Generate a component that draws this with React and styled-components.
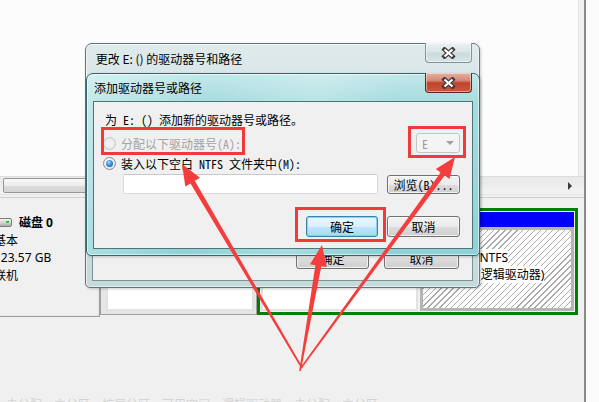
import React from 'react';
import styled, { createGlobalStyle } from 'styled-components';

const GlobalStyle = createGlobalStyle`
  html, body { margin: 0; padding: 0; }
  body {
    width: 599px;
    height: 402px;
    overflow: hidden;
    background: #fafafa;
    font-family: "Noto Sans", "Noto Sans CJK SC", sans-serif;
  }
`;

const uiFont = `"Noto Sans Mono CJK SC", "Noto Sans CJK SC", "Liberation Mono", monospace`;
const titleFont = `"Noto Sans CJK SC", "Noto Sans", sans-serif`;

const activeFrame = `
  linear-gradient(100deg, rgba(255,255,255,0.35) 0%, rgba(255,255,255,0) 30%, rgba(255,255,255,0.22) 55%, rgba(255,255,255,0) 75%),
  linear-gradient(180deg, #c3e7e9 0%, #a7dcdf 15%, #8fd2d5 100%)
`;
const inactiveFrame = `linear-gradient(180deg, #dfeaeb 0%, #d2e2e4 30%, #c6dadc 100%)`;

const Screen = styled.div`
  position: relative;
  width: 599px;
  height: 402px;
  overflow: hidden;
  display: flex;
  background: #fafafa;
`;

const Console = styled.div`
  width: 584px;
  display: flex;
  flex-direction: column;
  background: #f0f0f0;
  border-right: 2px solid #8a8a8a;
`;

const RightStrip = styled.div`
  flex: 1;
  background: #fbfbfb;
`;

const VolumeList = styled.div`
  height: 176px;
  background: #fcfcfc;
  border-right: 1px solid #e2e2e2;
  margin-right: 5px;
`;

const HScroll = styled.div`
  height: 17px;
  display: flex;
  align-items: center;
  padding: 0 12px 0 3px;
  background: linear-gradient(#e8e8e8, #f3f3f3);
  border-top: 1px solid #dedede;
  border-bottom: 1px solid #e6e6e6;
`;

const Thumb = styled.div`
  width: 300px;
  height: 13px;
  border: 1px solid #979797;
  border-radius: 2px;
  background: linear-gradient(#f8f8f8, #ececec 50%, #dcdcdc 51%, #d4d4d4);
`;

const ScrollArrow = styled.div`
  margin-left: auto;
  width: 0;
  height: 0;
  border-left: 4px solid #3d3d3d;
  border-top: 4px solid transparent;
  border-bottom: 4px solid transparent;
`;

const DiskPane = styled.div`
  margin-top: 2px;
  height: 119px;
  display: flex;
  border-top: 1px solid #d0d0d0;
`;

const DiskInfo = styled.div`
  width: 99px;
  border-right: 1px solid #a0a0a0;
  border-bottom: 1px solid #a0a0a0;
  box-shadow: inset -1px -1px 0 #e4e4e4;
  padding-top: 16px;
  overflow: hidden;
  font-size: 12px;
  line-height: 17.5px;
  color: #000;
`;

const InfoLine = styled.div`
  display: flex;
  align-items: center;
  margin-left: -6px;
  white-space: nowrap;
  font-weight: ${p => (p.$bold ? 700 : 400)};
`;

const DiskIcon = styled.span`
  position: relative;
  width: 16px;
  height: 7px;
  margin-right: 7px;
  border: 1px solid #7c7c7c;
  border-radius: 2px;
  background: linear-gradient(#f4f4f4, #cfcfcf 60%, #a9a9a9);

  &::after {
    content: '';
    position: absolute;
    right: 2px;
    top: 2px;
    width: 3px;
    height: 2px;
    background: #3fbf3f;
  }
`;

const Partitions = styled.div`
  flex: 1;
  display: flex;
  padding: 10px 6px 2px 0;
`;

const Primary = styled.div`
  width: 157px;
  box-sizing: border-box;
  display: flex;
  flex-direction: column;
  border: 1px solid #a0a0a0;
  background: #e6e6e6;
  padding: 0 2px 3px 5px;
`;

const Extended = styled.div`
  flex: 1;
  display: flex;
  gap: 2px;
  border: 3px solid #008000;
  padding: 1px;
`;

const Logical = styled.div`
  display: flex;
  flex-direction: column;
  width: ${p => (p.$grow ? 'auto' : '157px')};
  flex: ${p => (p.$grow ? 1 : 'none')};
`;

const Bar = styled.div`
  height: 15px;
  background: ${p => p.$color};
`;

const PartBody = styled.div`
  flex: 1;
  padding: 2px 3px;
  font-size: 12px;
  line-height: 17px;
  white-space: nowrap;
  overflow: hidden;
  background: ${p => (p.$hatched
    ? 'repeating-linear-gradient(135deg, #ffffff 0 3.3px, #a9a9a9 3.3px 4.2px)'
    : '#ffffff')};
  border: ${p => (p.$hatched ? '3px solid #b5b5b5' : '2px solid #e2e2e2')};
`;

const PartLine = styled.div`
  & > span {
    background: #ffffff;
    font-weight: ${p => (p.$bold ? 700 : 400)};
  }
`;

const Footer = styled.div`
  flex: 1;
  display: flex;
  flex-direction: column;
  justify-content: flex-end;
`;

const Legend = styled.div`
  height: 5px;
  overflow: hidden;
  padding-left: 6px;
  font-size: 12px;
  line-height: 16px;
  color: #d4d4d4;
  white-space: nowrap;
`;

/* dialogs */

const Dialog = styled.div`
  position: absolute;
  left: ${p => p.$left}px;
  top: ${p => p.$top}px;
  width: ${p => p.$width}px;
  height: ${p => p.$height}px;
  box-sizing: border-box;
  display: flex;
  flex-direction: column;
  padding: 0 6px 6px;
  border: 1px solid ${p => (p.$active ? '#34666c' : '#5f7579')};
  border-radius: 7px 7px 5px 5px;
  background: ${p => (p.$active ? activeFrame : inactiveFrame)};
  box-shadow: inset 0 0 0 1px rgba(255, 255, 255, 0.55), 1px 1px 3px rgba(0, 0, 0, 0.2);
`;

const TitleBar = styled.div`
  height: ${p => p.$height}px;
  display: flex;
  align-items: center;
  padding-left: 1px;
  font-family: ${titleFont};
  font-size: 12px;
  color: #000;
  white-space: nowrap;
`;

const CloseButton = styled.div`
  position: absolute;
  top: -1px;
  right: 7px;
  width: 47px;
  height: 20px;
  box-sizing: border-box;
  display: flex;
  align-items: center;
  justify-content: center;
  border: 1px solid ${p => (p.$active ? '#5b2a22' : '#7f9599')};
  border-top: none;
  border-radius: 0 0 4px 4px;
  background: ${p => (p.$active
    ? 'linear-gradient(#e7b0a4 0%, #d68774 40%, #c2432d 52%, #c9573f 100%)'
    : 'linear-gradient(#e9f0f1 0%, #dbe6e7 45%, #cbdcde 52%, #d6e4e5 100%)')};
  box-shadow: inset 0 0 0 1px rgba(255, 255, 255, 0.45);
`;

const Client = styled.div`
  flex: 1;
  display: flex;
  flex-direction: column;
  border: 1px solid ${p => (p.$active ? '#4d7479' : '#7b9195')};
  background: #f0f0f0;
  font-family: ${uiFont};
  font-size: 12px;
  color: #000;
`;

const OuterClient = styled(Client)`
  flex-direction: row;
  justify-content: flex-end;
  align-items: flex-end;
  gap: 15px;
  padding: 0 13px 11px 0;
`;

const InnerClient = styled(Client)`
  padding: 11px 12px 0 9px;
`;

const Intro = styled.div`
  margin-left: 2px;
  height: 14px;
  line-height: 14px;
  white-space: nowrap;
`;

const OptionRow = styled.div`
  display: flex;
  align-items: center;
  height: ${p => p.$height}px;
  margin-top: ${p => p.$gap}px;
  white-space: nowrap;
  color: ${p => (p.$disabled ? '#a3a3a3' : '#000')};
`;

const Radio = styled.span`
  position: relative;
  width: 13px;
  height: 13px;
  box-sizing: border-box;
  margin-right: 5px;
  border-radius: 50%;
  border: 1px solid ${p => (p.$disabled ? '#c4c4c4' : '#8a8c8e')};
  background: ${p => (p.$disabled
    ? 'radial-gradient(circle at 50% 50%, #f6f6f6, #e4e4e4)'
    : 'radial-gradient(circle at 40% 35%, #ffffff, #dcdcdc)')};

  &::after {
    content: '';
    display: ${p => (p.$checked ? 'block' : 'none')};
    position: absolute;
    left: 2px;
    top: 2px;
    width: 7px;
    height: 7px;
    border-radius: 50%;
    background: radial-gradient(circle at 40% 35%, #a9dcff 0%, #3a90dc 45%, #0d4f98 100%);
  }
`;

const Combo = styled.div`
  margin-left: auto;
  width: 44px;
  height: 20px;
  box-sizing: border-box;
  display: flex;
  align-items: center;
  justify-content: space-between;
  padding: 0 5px 0 5px;
  border: 1px solid #c3c6c8;
  border-radius: 3px;
  background: #f4f4f4;
  color: #9c9c9c;

  &::after {
    content: '';
    width: 0;
    height: 0;
    border-top: 4px solid #a0a0a0;
    border-left: 4px solid transparent;
    border-right: 4px solid transparent;
  }
`;

const FieldRow = styled.div`
  display: flex;
  align-items: center;
  gap: 9px;
  margin-top: 3px;
  margin-left: 20px;
`;

const PathInput = styled.div`
  width: 255px;
  height: 20px;
  box-sizing: border-box;
  border: 1px solid #dadada;
  border-top-color: #c9c9c9;
  border-radius: 2px;
  background: #fff;
`;

const Button = styled.div`
  width: ${p => p.$width}px;
  height: ${p => p.$height || 21}px;
  box-sizing: border-box;
  display: flex;
  align-items: center;
  justify-content: center;
  border: 1px solid ${p => (p.$default ? '#3c7fb1' : '#707070')};
  border-radius: 3px;
  background: ${p => (p.$default
    ? 'linear-gradient(#eaf6fd 0%, #d9f0fc 50%, #bee6fd 51%, #a7d9f5 100%)'
    : 'linear-gradient(#f2f2f2 0%, #ebebeb 50%, #dddddd 51%, #cfcfcf 100%)')};
  box-shadow: inset 0 0 0 1px ${p => (p.$default ? 'rgba(120, 210, 250, 0.9)' : 'rgba(255, 255, 255, 0.7)')};
  font-family: ${uiFont};
  font-size: 12px;
  color: #000;
  white-space: nowrap;
`;

const HiddenTopButton = styled(Button)`
  align-items: flex-end;
  padding-bottom: 1px;
`;

const ButtonRow = styled.div`
  display: flex;
  justify-content: flex-end;
  gap: 9px;
  margin-top: 22px;
`;

const Overlay = styled.svg`
  position: absolute;
  left: 0;
  top: 0;
  pointer-events: none;
`;

function CloseGlyph() {
  return (
    <svg width="15" height="12" viewBox="0 0 15 12">
      <path d="M3.5 2.5 L11.5 9.5 M11.5 2.5 L3.5 9.5" stroke="#3d3d3d" strokeWidth="4.4" strokeLinecap="square" fill="none" />
      <path d="M3.5 2.5 L11.5 9.5 M11.5 2.5 L3.5 9.5" stroke="#ffffff" strokeWidth="2.2" strokeLinecap="butt" fill="none" />
    </svg>
  );
}

function arrowPoints(bx, by, tx, ty, head, headW, w0, w1) {
  const dx = tx - bx;
  const dy = ty - by;
  const len = Math.hypot(dx, dy);
  const ux = dx / len;
  const uy = dy / len;
  const nx = -uy;
  const ny = ux;
  const hx = tx - ux * head;
  const hy = ty - uy * head;
  const p = (x, y) => `${x.toFixed(1)},${y.toFixed(1)}`;
  return [
    p(bx + (nx * w0) / 2, by + (ny * w0) / 2),
    p(hx + (nx * w1) / 2, hy + (ny * w1) / 2),
    p(hx + (nx * headW) / 2, hy + (ny * headW) / 2),
    p(tx, ty),
    p(hx - (nx * headW) / 2, hy - (ny * headW) / 2),
    p(hx - (nx * w1) / 2, hy - (ny * w1) / 2),
    p(bx - (nx * w0) / 2, by - (ny * w0) / 2),
  ].join(' ');
}

const arrows = [
  { bx: 302, by: 368, tx: 182, ty: 164, w1: 5 },
  { bx: 300, by: 371, tx: 322, ty: 245, w1: 6 },
  { bx: 301, by: 368, tx: 455, ty: 157, w1: 5 },
];

const marks = [
  { x: 102.5, y: 128.5, w: 141, h: 25 },
  { x: 409.5, y: 127.5, w: 55, h: 29 },
  { x: 296.5, y: 208.5, w: 88, h: 32 },
];

export default function App() {
  return (
    <>
      <GlobalStyle />
      <Screen>
        <Console>
          <VolumeList />
          <HScroll>
            <Thumb />
            <ScrollArrow />
          </HScroll>
          <DiskPane>
            <DiskInfo>
              <InfoLine $bold>
                <DiskIcon />
                磁盘 0
              </InfoLine>
              <InfoLine>基本</InfoLine>
              <InfoLine>123.57 GB</InfoLine>
              <InfoLine>联机</InfoLine>
            </DiskInfo>
            <Partitions>
              <Primary>
                <Bar $color="#000080" />
                <PartBody>
                  <PartLine $bold><span>(C:)</span></PartLine>
                  <PartLine><span>48.83 GB NTFS</span></PartLine>
                </PartBody>
              </Primary>
              <Extended>
                <Logical>
                  <Bar $color="#0000ff" />
                  <PartBody>
                    <PartLine $bold><span>(D:)</span></PartLine>
                  </PartBody>
                </Logical>
                <Logical $grow>
                  <Bar $color="#0000ff" />
                  <PartBody $hatched>
                    <PartLine $bold><span>(E:)</span></PartLine>
                    <PartLine><span>48.83 GB NTFS</span></PartLine>
                    <PartLine><span>状态良好 (逻辑驱动器)</span></PartLine>
                  </PartBody>
                </Logical>
              </Extended>
            </Partitions>
          </DiskPane>
          <Footer>
            <Legend>未分配　主分区　扩展分区　可用空间　逻辑驱动器　未分配　主分区</Legend>
          </Footer>
        </Console>
        <RightStrip />

        <Dialog $left={85} $top={43} $width={395} $height={245}>
          <TitleBar $height={29}>&nbsp;更改 E: () 的驱动器号和路径</TitleBar>
          <CloseButton>
            <CloseGlyph />
          </CloseButton>
          <OuterClient>
            <HiddenTopButton $width={73} $height={23}>确定</HiddenTopButton>
            <HiddenTopButton $width={75} $height={23}>取消</HiddenTopButton>
          </OuterClient>
        </Dialog>

        <Dialog $active $left={86} $top={73} $width={394} $height={183}>
          <TitleBar $height={27}>添加驱动器号或路径</TitleBar>
          <CloseButton $active>
            <CloseGlyph />
          </CloseButton>
          <InnerClient $active>
            <Intro>为 E: () 添加新的驱动器号或路径。</Intro>
            <OptionRow $disabled $height={20} $gap={6}>
              <Radio $disabled />
              分配以下驱动器号(A):
              <Combo>E</Combo>
            </OptionRow>
            <OptionRow $height={16} $gap={2}>
              <Radio $checked />
              装入以下空白 NTFS 文件夹中(M):
            </OptionRow>
            <FieldRow>
              <PathInput />
              <Button $width={73} $height={19}>浏览(B)...</Button>
            </FieldRow>
            <ButtonRow>
              <Button $default $width={72}>确定</Button>
              <Button $width={73}>取消</Button>
            </ButtonRow>
          </InnerClient>
        </Dialog>

        <Overlay width="599" height="402" viewBox="0 0 599 402">
          {marks.map((m, i) => (
            <rect key={i} x={m.x} y={m.y} width={m.w} height={m.h} fill="none" stroke="#f23a3a" strokeWidth="3" />
          ))}
          {arrows.map((a, i) => (
            <polygon
              key={i}
              points={arrowPoints(a.bx, a.by, a.tx, a.ty, 21, 17, 1.6, a.w1)}
              fill="#f43d3d"
            />
          ))}
        </Overlay>
      </Screen>
    </>
  );
}
